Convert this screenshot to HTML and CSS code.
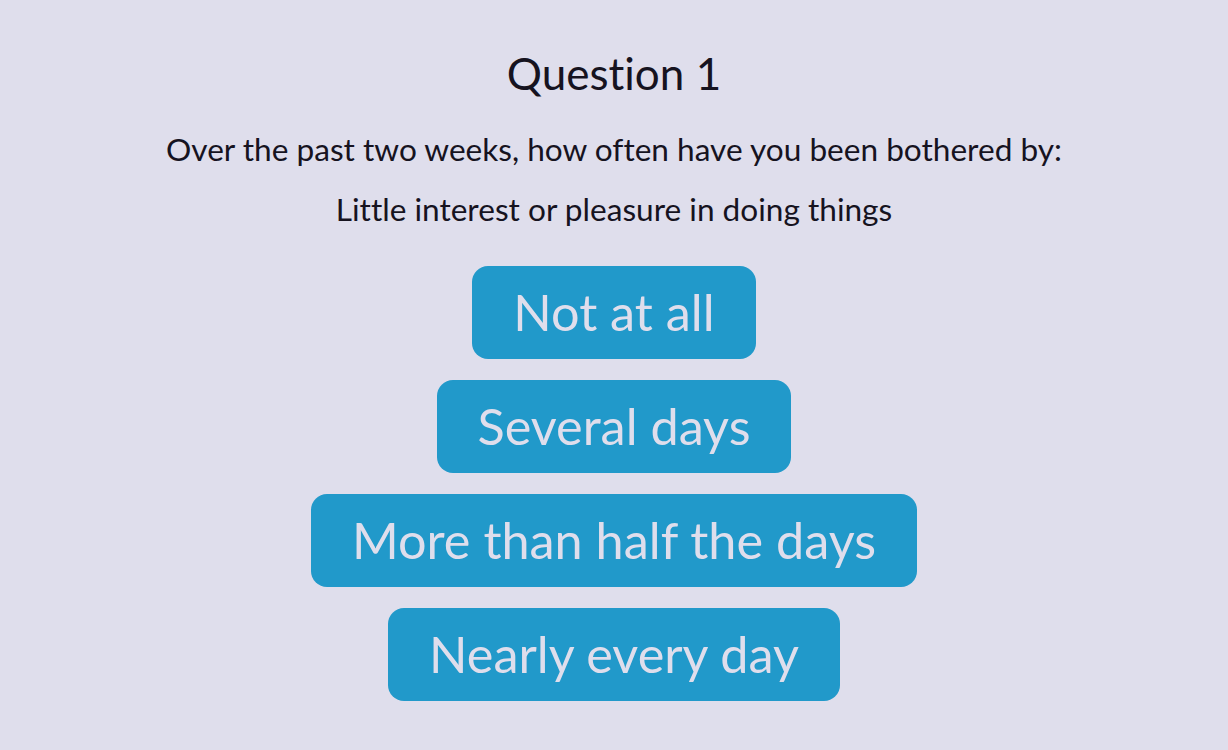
FILE: index.html
```html
<!DOCTYPE html>
<html lang="en">
<head>
<meta charset="utf-8">
<title>Question 1</title>
<link rel="stylesheet" href="styles.css">
</head>
<body>
<main class="quiz">
  <h1 class="quiz-title">Question 1</h1>
  <p class="quiz-prompt">Over the past two weeks, how often have you been bothered by:</p>
  <p class="quiz-item">Little interest or pleasure in doing things</p>
  <div class="answers">
    <button class="answer">Not at all</button>
    <button class="answer">Several days</button>
    <button class="answer">More than half the days</button>
    <button class="answer">Nearly every day</button>
  </div>
</main>
</body>
</html>
```
FILE: styles.css
```css
html, body {
  margin: 0;
  padding: 0;
  background: #dfdeec;
}
body {
  font-family: "Lato", "Open Sans", sans-serif;
  font-variant-ligatures: none;
  color: #16131f;
}
.quiz {
  display: flex;
  flex-direction: column;
  align-items: center;
  padding-top: 47px;
}
.quiz-title {
  margin: 0;
  font-size: 44px;
  line-height: 53px;
  font-weight: 400;
}
.quiz-prompt {
  margin: 30px 0 0;
  font-size: 31.6px;
  line-height: 38px;
}
.quiz-item {
  margin: 22px 0 0;
  font-size: 31.6px;
  line-height: 38px;
}
.answers {
  margin-top: 38px;
  display: flex;
  flex-direction: column;
  align-items: center;
  gap: 21px;
}
.answer {
  font-family: "Lato", "Open Sans", sans-serif;
  font-variant-ligatures: none;
  font-size: 50.4px;
  line-height: 61px;
  padding: 15px 41px 17px;
  border: none;
  border-radius: 16px;
  background: #2199ca;
  color: #dfdeec;
  cursor: pointer;
}
```
